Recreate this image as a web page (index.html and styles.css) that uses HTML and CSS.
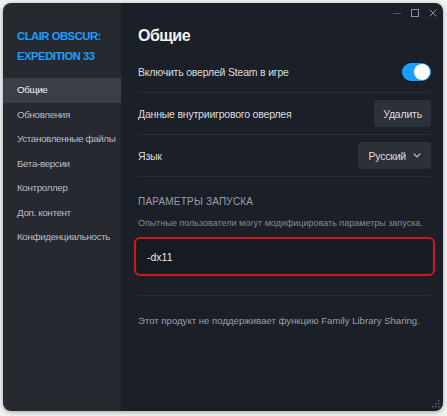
FILE: index.html
```html
<!DOCTYPE html>
<html lang="ru">
<head>
    <meta charset="UTF-8">
    <meta name="viewport" content="width=device-width, initial-scale=1.0">
    <title>Свойства — Clair Obscur: Expedition 33</title>
    <link rel="stylesheet" href="styles.css">
</head>
<body>
    <div class="window">
        <aside class="sidebar">
            <div class="game-title">CLAIR OBSCUR:<br>EXPEDITION 33</div>
            <nav class="menu">
                <a class="active" href="#">Общие</a>
                <a href="#">Обновления</a>
                <a href="#">Установленные файлы</a>
                <a href="#">Бета-версии</a>
                <a href="#">Контроллер</a>
                <a href="#">Доп. контент</a>
                <a href="#">Конфиденциальность</a>
            </nav>
        </aside>

        <main class="content">
            <div class="titlebar">
                <span class="win-btn">
                    <svg width="8" height="8" viewBox="0 0 8 8"><path d="M0 4.5h8" stroke="#555a63" stroke-width="1"/></svg>
                </span>
                <span class="win-btn">
                    <svg width="8" height="8" viewBox="0 0 8 8"><rect x="0.5" y="0.5" width="7" height="7" fill="none" stroke="#8b9099" stroke-width="1"/></svg>
                </span>
                <span class="win-btn">
                    <svg width="8" height="8" viewBox="0 0 8 8"><path d="M0.5 0.5l7 7M7.5 0.5l-7 7" stroke="#8b9099" stroke-width="1"/></svg>
                </span>
            </div>

            <h1 class="page-title">Общие</h1>

            <div class="row">
                <span>Включить оверлей Steam в игре</span>
                <span class="toggle on"><span class="knob"></span></span>
            </div>
            <div class="row">
                <span>Данные внутриигрового оверлея</span>
                <button class="btn">Удалить</button>
            </div>
            <div class="row">
                <span>Язык</span>
                <button class="btn select">Русский
                    <svg width="8" height="5" viewBox="0 0 8 5"><path d="M0.7 0.7l3.3 3.3 3.3-3.3" fill="none" stroke="#c6c9cd" stroke-width="1.1"/></svg>
                </button>
            </div>

            <section class="launch">
                <h2 class="section-title">ПАРАМЕТРЫ ЗАПУСКА</h2>
                <p class="hint">Опытные пользователи могут модифицировать параметры запуска.</p>
                <div class="input-wrap">
                    <input class="launch-input" type="text" value="-dx11">
                </div>
            </section>

            <p class="note">Этот продукт не поддерживает функцию Family Library Sharing.</p>

            <svg class="grip" width="8" height="8" viewBox="0 0 8 8">
                <rect x="6" y="0" width="1.5" height="1.5" fill="#5c616a"/>
                <rect x="3" y="3" width="1.5" height="1.5" fill="#5c616a"/>
                <rect x="6" y="3" width="1.5" height="1.5" fill="#5c616a"/>
                <rect x="0" y="6" width="1.5" height="1.5" fill="#5c616a"/>
                <rect x="3" y="6" width="1.5" height="1.5" fill="#5c616a"/>
                <rect x="6" y="6" width="1.5" height="1.5" fill="#5c616a"/>
            </svg>
        </main>
    </div>
</body>
</html>
```

FILE: styles.css
```css
:root {
    --side-bg: #262930;
    --main-bg: #1b1f27;
    --accent: #1a9fff;
    --text: #dcdedf;
    --muted: #9aa0a8;
    --line: #2a2e36;
}

* {
    margin: 0;
    padding: 0;
    box-sizing: border-box;
}

body {
    font-family: 'Liberation Sans', Arial, sans-serif;
    background-color: #f1f1f1;
    color: var(--text);
    padding: 3px 4px 5px 3px;
}

.window {
    display: flex;
    width: 440px;
    height: 408px;
    border-radius: 8px;
    overflow: hidden;
    box-shadow: 0 1px 4px rgba(0,0,0,0.35);
}

.sidebar {
    width: 118px;
    background-color: var(--side-bg);
    padding-top: 23px;
}

.game-title {
    color: var(--accent);
    font-size: 11.3px;
    font-weight: bold;
    letter-spacing: -0.5px;
    line-height: 20px;
    padding-left: 14px;
    margin-bottom: 12px;
    white-space: nowrap;
}

.menu a {
    display: block;
    height: 24.5px;
    line-height: 24px;
    padding-left: 14px;
    font-size: 9.8px;
    letter-spacing: -0.35px;
    color: #b8bcc2;
    text-decoration: none;
    white-space: nowrap;
}

.menu a.active {
    background-color: #3a3e47;
    color: #eef0f2;
}

.content {
    position: relative;
    flex: 1;
    background-color: var(--main-bg);
    padding: 0 12px 0 17px;
}

.titlebar {
    display: flex;
    justify-content: flex-end;
    gap: 10px;
    height: 22px;
    padding-top: 6px;
    margin-right: -6px;
}

.win-btn {
    display: flex;
    width: 8px;
    height: 8px;
}

.page-title {
    font-size: 16px;
    font-weight: bold;
    letter-spacing: -0.5px;
    color: #f2f3f4;
    line-height: 22px;
    margin-bottom: 4px;
}

.row {
    display: flex;
    justify-content: space-between;
    align-items: center;
    height: 42px;
    border-bottom: 1px solid var(--line);
    font-size: 10.5px;
    letter-spacing: -0.2px;
    color: var(--text);
}

.toggle {
    width: 29px;
    height: 18px;
    border-radius: 9px;
    background-color: var(--accent);
    position: relative;
}

.toggle .knob {
    position: absolute;
    top: 1px;
    right: 1px;
    width: 16px;
    height: 16px;
    border-radius: 50%;
    background-color: #fff;
}

.btn {
    height: 27px;
    padding: 0 9px;
    border: none;
    border-radius: 3px;
    background-color: #2c3039;
    color: var(--text);
    font-family: inherit;
    font-size: 10.5px;
    letter-spacing: -0.2px;
}

.select {
    display: flex;
    align-items: center;
    gap: 7px;
    padding: 0 10px 0 10px;
}

.launch {
    padding-top: 18px;
    padding-bottom: 19px;
    border-bottom: 1px solid var(--line);
}

.section-title {
    font-size: 10px;
    font-weight: normal;
    color: var(--muted);
    letter-spacing: 0.2px;
    line-height: 14px;
    margin-bottom: 7px;
}

.hint {
    font-size: 9px;
    color: #848b94;
    line-height: 14px;
    white-space: nowrap;
    margin-bottom: 7px;
}

.input-wrap {
    margin: 0 -4px;
    border: 2px solid #d2151b;
    border-radius: 6px;
    padding: 1px;
}

.launch-input {
    display: block;
    width: 100%;
    height: 33px;
    border: none;
    border-radius: 3px;
    background-color: #161a21;
    color: #e6e8ea;
    font-family: inherit;
    font-size: 10.5px;
    padding-left: 10px;
    outline: none;
}

.note {
    font-size: 9.6px;
    line-height: 12px;
    color: var(--muted);
    padding-top: 19px;
    white-space: nowrap;
}

.grip {
    position: absolute;
    right: 3px;
    bottom: 3px;
}
```
